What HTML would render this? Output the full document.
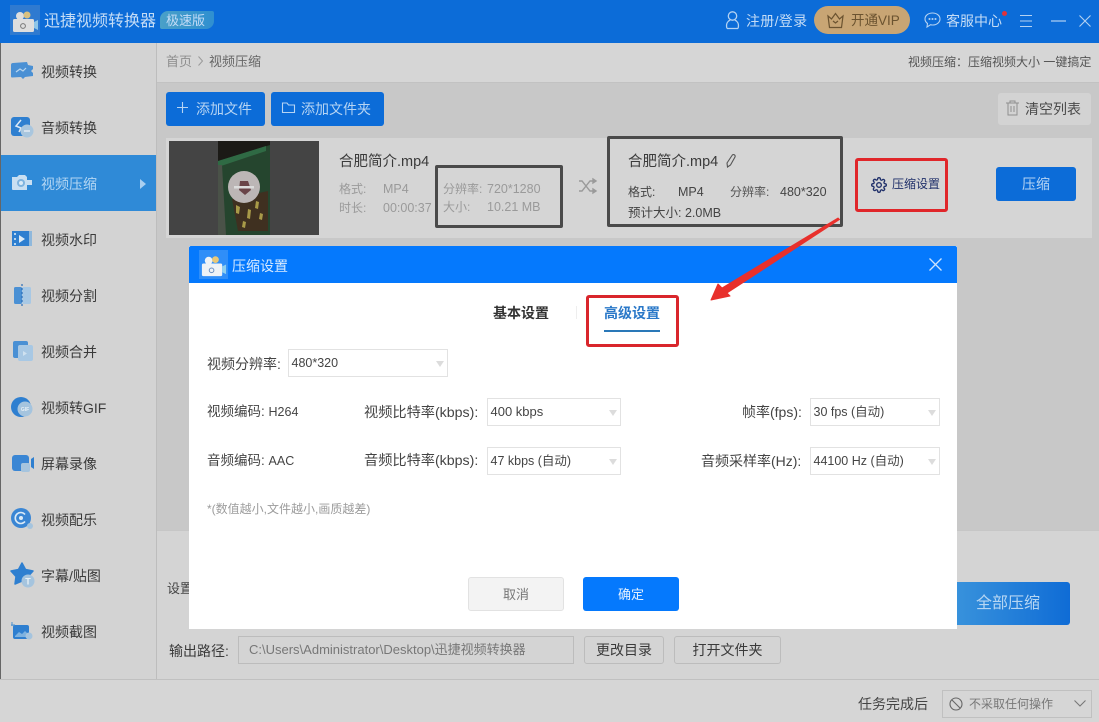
<!DOCTYPE html>
<html lang="zh"><head><meta charset="utf-8"><style>
html,body{margin:0;padding:0;width:1099px;height:722px;overflow:hidden;background:#d4d4d4}
body{position:relative;font-family:"Liberation Sans","Noto Sans CJK SC",sans-serif;color:#333}
.b{position:absolute;box-sizing:border-box}
.t{position:absolute;white-space:nowrap;font-size:14px;line-height:20px;height:20px}
.s{font-size:13px}.xs{font-size:12px}
svg{position:absolute;overflow:visible}
.sel{position:absolute;box-sizing:border-box;background:#fff;border:1px solid #e2e2e2;height:28px;font-size:12.5px;line-height:26px;padding-left:2.5px;color:#444;white-space:nowrap}
.sel:after{content:"";position:absolute;right:3px;top:11px;border-left:4px solid transparent;border-right:4px solid transparent;border-top:6px solid #dcdcdc}
.btn{position:absolute;box-sizing:border-box;border-radius:3px;text-align:center;white-space:nowrap}
.ic{filter:blur(.35px)}
</style></head><body>
<!-- base regions -->
<div class="b" style="left:0;top:0;width:1099px;height:43px;background:#0c6cd8"></div>
<div class="b" style="left:0;top:43px;width:157px;height:637px;background:#d3d3d3;border-right:1px solid #bdbdbd"></div>
<div class="b" style="left:0;top:43px;width:1px;height:679px;background:#666"></div>
<div class="b" style="left:157px;top:43px;width:942px;height:40px;background:#d6d6d6;border-bottom:1px solid #c2c2c2"></div>
<div class="b" style="left:157px;top:83px;width:942px;height:447px;background:#c8c8c8"></div>
<div class="b" style="left:157px;top:530px;width:942px;height:150px;background:#d4d4d4;border-top:1px solid #c6c6c6"></div>
<div class="b" style="left:0;top:679px;width:1099px;height:43px;background:#d6d6d6;border-top:1px solid #c0c0c0"></div>

<!-- title bar -->
<div class="b" style="left:10px;top:5px;width:30px;height:30px;background:#2f7ad0"></div>
<svg class="ic" style="left:10px;top:5px" width="30" height="30" viewBox="0 0 30 30"><rect x="3" y="14" width="21" height="13" rx="1.5" fill="#dedede"/><circle cx="10" cy="11" r="4" fill="#dedede"/><circle cx="17" cy="10" r="3.5" fill="#d8c080"/><path d="M24 17l4-2v10l-4-2z" fill="#8fc6e8"/><circle cx="13" cy="21" r="2.400" fill="none" stroke="#777" stroke-width="1"/></svg>
<div class="t" style="left:44px;top:11px;font-size:16px;color:#c4dcf6;line-height:22px;height:22px">迅捷视频转换器</div>
<div class="b" style="left:160px;top:11px;width:54px;height:18px;background:linear-gradient(90deg,#4aa0c8,#2f8fd0);border-radius:8px 2px 8px 2px"></div>
<div class="t xs" style="left:166px;top:11px;color:#c4dcf6;font-size:13px">极速版</div>

<svg style="left:724px;top:10px" width="18" height="20" viewBox="0 0 18 20" fill="none" stroke="#b4d2f2" stroke-width="1.300"><circle cx="8.500" cy="6" r="4.200"/><path d="M3 18.500c-1.500-5 1-7.500 3.200-8.500M14 18.500c1.500-5-1-7.500-3.200-8.500M3 18.500h11"/></svg>
<div class="t" style="left:746px;top:11px;color:#c4dcf6;letter-spacing:.3px">注册/登录</div>
<div class="b" style="left:814px;top:6px;width:96px;height:28px;border-radius:14px;background:#c8a574"></div>
<svg style="left:826px;top:12px" width="19" height="17" viewBox="0 0 19 17" fill="none" stroke="#6b5330" stroke-width="1.200"><path d="M2 4l3.500 3L9.500 1.500 13.500 7 17 4l-1.500 11.500h-12z"/><path d="M7 9l2.500 2L12 9"/></svg>
<div class="t" style="left:851px;top:11px;color:#6b5330;font-size:13.5px">开通VIP</div>
<svg style="left:924px;top:12px" width="17" height="16" viewBox="0 0 17 16" fill="none" stroke="#b4d2f2" stroke-width="1.100"><path d="M8.500 1C4.300 1 1 3.600 1 7c0 1.800 1 3.400 2.500 4.500L3 15l3.600-2.300c.6.200 1.200.3 1.900.3 4.200 0 7.500-2.600 7.500-6S12.700 1 8.500 1z"/><circle cx="5.500" cy="7" r=".5"/><circle cx="8.500" cy="7" r=".5"/><circle cx="11.500" cy="7" r=".5"/></svg>
<div class="t" style="left:946px;top:11px;color:#c4dcf6">客服中心</div>
<div class="b" style="left:1002px;top:11px;width:5px;height:5px;border-radius:50%;background:#e0333c"></div>
<svg style="left:1019px;top:14px" width="14" height="14" viewBox="0 0 14 14" stroke="#b4d2f2" stroke-width="1.100"><path d="M1 1.500h12M1 7h12M1 12.500h12"/></svg>
<svg style="left:1051px;top:20px" width="15" height="2" viewBox="0 0 15 2" stroke="#b4d2f2" stroke-width="1.200"><path d="M0 1h15"/></svg>
<svg style="left:1079px;top:15px" width="12" height="12" viewBox="0 0 12 12" stroke="#b4d2f2" stroke-width="1.100"><path d="M.5.500l11 11M11.500.5l-11 11"/></svg>

<!-- sidebar -->
<div class="b" style="left:1px;top:155px;width:155px;height:56px;background:#2f8ad7"></div>
<svg style="left:139px;top:179px" width="8" height="10"><path d="M1 0l6 5-6 5z" fill="#a9cff0"/></svg>
<div class="t" style="left:41px;top:62px;color:#3a3a3a">视频转换</div>
<div class="t" style="left:41px;top:118px;color:#3a3a3a">音频转换</div>
<div class="t" style="left:41px;top:174px;color:#b4d6f3">视频压缩</div>
<div class="t" style="left:41px;top:230px;color:#3a3a3a">视频水印</div>
<div class="t" style="left:41px;top:286px;color:#3a3a3a">视频分割</div>
<div class="t" style="left:41px;top:342px;color:#3a3a3a">视频合并</div>
<div class="t" style="left:41px;top:398px;color:#3a3a3a">视频转GIF</div>
<div class="t" style="left:41px;top:454px;color:#3a3a3a">屏幕录像</div>
<div class="t" style="left:41px;top:510px;color:#3a3a3a">视频配乐</div>
<div class="t" style="left:41px;top:566px;color:#3a3a3a">字幕/贴图</div>
<div class="t" style="left:41px;top:622px;color:#3a3a3a">视频截图</div>
<!-- sidebar icons -->
<svg class="ic" style="left:10px;top:60px" width="24" height="22" viewBox="0 0 24 22"><path d="M1 5a2 2 0 0 1 2-2l14-1 1 3 5 1v3l-2 2 2 2v3l-8 1-2 2-2-2-9 .5a1 1 0 0 1-1-1z" fill="#4a90d4"/><path d="M6 12l4-3 3 2 3-3" stroke="#b8d6f0" stroke-width="1.200" fill="none"/></svg>
<svg class="ic" style="left:10px;top:115px" width="24" height="24" viewBox="0 0 24 24"><rect x="1" y="2" width="19" height="19" rx="3" fill="#2e7fd0"/><path d="M11 5L6 11l5 2-2 4" stroke="#dbe9f6" stroke-width="1.500" fill="none"/><circle cx="17" cy="16" r="6.500" fill="#a9c6de"/><path d="M14 16h6" stroke="#e8eef4" stroke-width="1.400"/></svg>
<svg class="ic" style="left:10px;top:172px" width="24" height="22" viewBox="0 0 24 22"><path d="M2 5h5l2-2h6l2 2v3h5v5h-5v5H3a1 1 0 0 1-1-1z" fill="#c8dff2"/><circle cx="11" cy="11" r="4" fill="#7fb4df"/><circle cx="11" cy="11" r="2" fill="#dcebf7"/></svg>
<svg class="ic" style="left:11px;top:229px" width="22" height="20" viewBox="0 0 22 20"><rect x="1" y="2" width="17" height="15" fill="#2e7fd0"/><path d="M18 2h3v15h-3z" fill="#8fb8dc"/><path d="M8 6l6 4-6 4z" fill="#dcebf7"/><path d="M3 4h2v2H3zM3 9h2v2H3zM3 14h2v2H3z" fill="#b9d6ef"/></svg>
<svg class="ic" style="left:13px;top:283px" width="20" height="24" viewBox="0 0 20 24"><rect x="1" y="4" width="8" height="17" rx="1.500" fill="#4a90d4"/><rect x="9" y="4" width="9" height="17" rx="1.500" fill="#a8c8e4"/><path d="M9 1v23" stroke="#2c6fb8" stroke-width="1.200" stroke-dasharray="2 2"/></svg>
<svg class="ic" style="left:12px;top:340px" width="22" height="22" viewBox="0 0 22 22"><rect x="1" y="1" width="15" height="17" rx="2" fill="#4a90d4"/><rect x="6" y="5" width="15" height="16" rx="2" fill="#a8c8e4"/><path d="M11 11l4 2.500-4 2.500z" fill="#cfe1f0"/></svg>
<svg class="ic" style="left:10px;top:396px" width="24" height="24" viewBox="0 0 24 24"><circle cx="11" cy="11" r="10" fill="#2e7fd0"/><circle cx="15" cy="13" r="7.500" fill="#a5c4de"/><text x="15" y="15" font-size="5" fill="#e8f0f6" text-anchor="middle" font-family="Liberation Sans" font-weight="bold">GIF</text></svg>
<svg class="ic" style="left:11px;top:454px" width="24" height="20" viewBox="0 0 24 20"><rect x="1" y="1" width="17" height="16" rx="3" fill="#3a86d4"/><path d="M20 5l3-2v12l-3-2z" fill="#2e7fd0"/><rect x="10" y="9" width="9" height="9" rx="2" fill="#a5c4de"/></svg>
<svg class="ic" style="left:10px;top:507px" width="24" height="24" viewBox="0 0 24 24"><circle cx="11" cy="11" r="10" fill="#3a86d4"/><path d="M15 7.500a5.500 5.500 0 1 0 0 7" fill="none" stroke="#dcebf7" stroke-width="1.600"/><circle cx="11" cy="11" r="2" fill="#dcebf7"/><circle cx="20" cy="19" r="3" fill="#a5c4de"/></svg>
<svg class="ic" style="left:10px;top:562px" width="26" height="26" viewBox="0 0 26 26"><path d="M12 1l3.500 6.500 7.500 1.500-5 5.500 1 7.500-7-3-7 3 1-7.500-5-5.500 7.500-1.500z" fill="#2e7fd0" stroke="#2e7fd0" stroke-width="1.500" stroke-linejoin="round"/><circle cx="18" cy="19" r="6.500" fill="#a5c4de"/><text x="18" y="22.500" font-size="9" fill="#e8f0f6" text-anchor="middle" font-family="Liberation Sans" font-weight="bold">T</text></svg>
<svg class="ic" style="left:11px;top:622px" width="22" height="20" viewBox="0 0 22 20"><rect x="2" y="3" width="16" height="14" rx="2" fill="#2e7fd0"/><path d="M1 0v4M0 3h4" stroke="#4a90d0"/><path d="M4 14l4-4 3 2 3-3 4 4v2H4z" fill="#7db2e0"/><circle cx="18" cy="14" r="3.500" fill="#a5c4de"/></svg>

<!-- header strip -->
<div class="t s" style="left:166px;top:52px;color:#8e8e8e">首页</div>
<svg style="left:198px;top:56px" width="6" height="11" fill="none" stroke="#9a9a9a"><path d="M.5.500l4 4.500-4 4.500"/></svg>
<div class="t s" style="left:209px;top:52px;color:#666">视频压缩</div>
<div class="t xs" style="left:908px;top:52px;color:#555">视频压缩：压缩视频大小 一键搞定</div>

<!-- toolbar -->
<div class="btn" style="left:166px;top:92px;width:99px;height:34px;background:#0c6cd8"></div>
<svg style="left:177px;top:102px" width="11" height="11" stroke="#b6d4f3" stroke-width="1.100"><path d="M5.500 0v11M0 5.500h11"/></svg>
<div class="t" style="left:196px;top:99px;color:#b6d4f3">添加文件</div>
<div class="btn" style="left:271px;top:92px;width:113px;height:34px;background:#0c6cd8"></div>
<svg style="left:282px;top:102px" width="13" height="11" fill="none" stroke="#b6d4f3" stroke-width="1.100"><path d="M.5 1h4.500l1.500 2h6v7.500H.5z"/></svg>
<div class="t" style="left:301px;top:99px;color:#b6d4f3">添加文件夹</div>
<div class="btn" style="left:998px;top:93px;width:93px;height:32px;background:#d3d3d3"></div>
<svg style="left:1006px;top:100px" width="13" height="16" fill="none" stroke="#8f8f8f"><path d="M0 3h13M4 3V1h5v2M2 3v12h9V3M5 6v6M8 6v6"/></svg>
<div class="t" style="left:1025px;top:99px;color:#4a4a4a">清空列表</div>

<!-- file row -->
<div class="b" style="left:166px;top:138px;width:926px;height:100px;background:#d5d5d5"></div>
<div class="b" style="left:169px;top:141px;width:150px;height:94px;background:#444"></div>
<svg class="ic" style="left:218px;top:141px" width="52" height="94" viewBox="0 0 52 94"><rect width="52" height="94" fill="#1b1a16"/><path d="M0 20L52 4v90H0z" fill="#25452e"/><path d="M0 20L48 5v5L0 26z" fill="#2f6a44"/><path d="M14 58l36-8v40H20z" fill="#3f3020"/><path d="M18 64l4 2-1 7-3-1zM30 68l3 1-1 9-3-1zM38 60l3 1-1 7-3-1zM25 80l3 1-1 6-3-1zM42 72l3 1-1 6-3-1z" fill="#a89a48"/><path d="M0 24h4l4 70H0z" fill="#4a5248"/><circle cx="26" cy="46" r="16" fill="#bcb6b6"/><path d="M22 40h8l3 9-6 5-6-5z" fill="#6a4448"/><rect x="16" y="45" width="20" height="2.500" fill="#dcdcdc"/></svg>
<div class="t" style="left:339px;top:152px;color:#3a3a3a;font-size:14.500px">合肥简介.mp4</div>
<div class="t xs" style="left:339px;top:179px;color:#9a9a9a">格式:</div>
<div class="t xs" style="left:383px;top:179px;color:#9a9a9a;font-size:12.500px">MP4</div>
<div class="t xs" style="left:339px;top:198px;color:#9a9a9a">时长:</div>
<div class="t xs" style="left:383px;top:198px;color:#9a9a9a;font-size:12.500px">00:00:37</div>
<div class="t xs" style="left:443px;top:179px;color:#9a9a9a">分辨率:</div>
<div class="t xs" style="left:487px;top:179px;color:#9a9a9a;font-size:12.500px">720*1280</div>
<div class="t xs" style="left:443px;top:197px;color:#9a9a9a">大小:</div>
<div class="t xs" style="left:487px;top:197px;color:#9a9a9a;font-size:12.500px">10.21 MB</div>
<div class="b" style="left:435px;top:165px;width:128px;height:63px;border:3px solid #4a4a4a;border-radius:2px"></div>
<svg style="left:579px;top:179px" width="17" height="14" fill="none" stroke="#9a9a9a" stroke-width="1.400"><path d="M0 2h3l8 10h4M0 12h3l8-10h4"/><path d="M14 0l3 2-3 2zM14 10l3 2-3 2z" fill="#9a9a9a"/></svg>
<div class="b" style="left:607px;top:136px;width:236px;height:91px;border:3px solid #4a4a4a;border-radius:2px"></div>
<div class="t" style="left:628px;top:152px;color:#3a3a3a;font-size:14.500px">合肥简介.mp4</div>
<svg style="left:725px;top:154px" width="12" height="14" fill="none" stroke="#555" stroke-width="1.100"><path d="M2 9l5-7.500a1.500 1.500 0 0 1 3 1.500L5.500 11 2.500 13z"/></svg>
<div class="t xs" style="left:628px;top:182px;color:#444">格式:</div>
<div class="t xs" style="left:678px;top:182px;color:#444;font-size:12.500px">MP4</div>
<div class="t xs" style="left:730px;top:182px;color:#555">分辨率:</div>
<div class="t xs" style="left:780px;top:182px;color:#444;font-size:12.500px">480*320</div>
<div class="t xs" style="left:628px;top:203px;color:#444;font-size:12.500px">预计大小: 2.0MB</div>
<div class="b" style="left:855px;top:158px;width:93px;height:54px;border:3px solid #e0262a;border-radius:3px"></div>
<svg style="left:871px;top:177px" width="16" height="16" viewBox="0 0 24 24" fill="none" stroke="#20306a" stroke-width="2"><circle cx="12" cy="12" r="3.500"/><path d="M19.400 15a1.700 1.700 0 0 0 .3 1.800l.1.100a2 2 0 1 1-2.900 2.900l-.1-.1a1.700 1.700 0 0 0-2.800 1.200V21a2 2 0 1 1-4 0v-.1a1.700 1.700 0 0 0-2.900-1.200l-.1.100a2 2 0 1 1-2.900-2.900l.1-.1a1.700 1.700 0 0 0-1.200-2.800H3a2 2 0 1 1 0-4h.1a1.700 1.700 0 0 0 1.200-2.900l-.1-.1a2 2 0 1 1 2.900-2.900l.1.100a1.700 1.700 0 0 0 2.800-1.200V3a2 2 0 1 1 4 0v.1a1.700 1.700 0 0 0 2.900 1.200l.1-.1a2 2 0 1 1 2.900 2.900l-.1.100a1.700 1.700 0 0 0 1.200 2.800H21a2 2 0 1 1 0 4h-.1a1.700 1.700 0 0 0-1.500 1z"/></svg>
<div class="t xs" style="left:892px;top:174px;color:#20306a">压缩设置</div>
<div class="btn" style="left:996px;top:167px;width:80px;height:34px;background:#0c6cd8;color:#b6d4f3;font-size:14px;line-height:34px">压缩</div>

<!-- bottom area -->
<div class="t s" style="left:167px;top:579px;color:#444">设置</div>
<div class="btn" style="left:950px;top:582px;width:120px;height:43px;background:linear-gradient(90deg,#3a94dc,#0f6cd6);color:#b6d6f3;font-size:16px;line-height:44px"><span style="margin-right:4px">全部压缩</span></div>
<div class="t" style="left:169px;top:641px;color:#3a3a3a;font-size:14px">输出路径:</div>
<div class="b" style="left:238px;top:636px;width:336px;height:28px;border:1px solid #bcbcbc"></div>
<div class="t s" style="left:249px;top:640px;color:#777">C:\Users\Administrator\Desktop\迅捷视频转换器</div>
<div class="btn" style="left:584px;top:636px;width:80px;height:28px;border:1px solid #bcbcbc;line-height:26px;font-size:14px;color:#3a3a3a">更改目录</div>
<div class="btn" style="left:674px;top:636px;width:107px;height:28px;border:1px solid #bcbcbc;line-height:26px;font-size:14px;color:#3a3a3a">打开文件夹</div>
<div class="t" style="left:858px;top:694px;color:#444">任务完成后</div>
<div class="b" style="left:942px;top:690px;width:150px;height:28px;border:1px solid #c0c0c0"></div>
<svg style="left:949px;top:697px" width="14" height="14" fill="none" stroke="#666" stroke-width="1.100"><circle cx="7" cy="7" r="6"/><path d="M3 3l8 8"/></svg>
<div class="t xs" style="left:969px;top:694px;color:#777">不采取任何操作</div>
<svg style="left:1074px;top:700px" width="12" height="7" fill="none" stroke="#777" stroke-width="1.100"><path d="M.5.500l5.500 5.500 5.500-5.500"/></svg>

<!-- dialog -->
<div class="b" style="left:189px;top:246px;width:768px;height:383px;background:#fff"></div>
<div class="b" style="left:189px;top:246px;width:768px;height:37px;background:#0579fd;border-radius:2px 2px 0 0"></div>
<div class="b" style="left:199px;top:250px;width:29px;height:29px;background:#2f8ef8"></div>
<svg class="ic" style="left:199px;top:250px" width="29" height="29" viewBox="0 0 30 30"><rect x="3" y="14" width="21" height="13" rx="1.500" fill="#eef2f6"/><circle cx="10" cy="11" r="4" fill="#eef2f6"/><circle cx="17" cy="10" r="3.500" fill="#e8c878"/><path d="M24 17l4-2v10l-4-2z" fill="#8fd0f0"/><circle cx="13" cy="21" r="2.400" fill="none" stroke="#6a8fc0" stroke-width="1"/></svg>
<div class="t" style="left:232px;top:256px;color:#d8ebff">压缩设置</div>
<svg style="left:929px;top:258px" width="13" height="13" stroke="#cfe4fc" stroke-width="1.300"><path d="M.5.500l12 12M12.500.5l-12 12"/></svg>

<div class="t" style="left:493px;top:303px;color:#333;font-weight:700;font-size:14px">基本设置</div>
<div class="b" style="left:576px;top:306px;width:1px;height:13px;background:#eee"></div>
<div class="t" style="left:604px;top:303px;color:#2a78c8;font-weight:700;font-size:14px">高级设置</div>
<div class="b" style="left:604px;top:330px;width:56px;height:2px;background:#2a78b8"></div>
<div class="b" style="left:586px;top:295px;width:93px;height:52px;border:3px solid #d9262c;border-radius:3px"></div>
<svg style="left:0;top:0" width="1099" height="722"><polygon points="838,218 839.500,219.500 727,293 730,296 711,300 718,284 722,288" fill="#e8302c" stroke="#e8302c" stroke-width="1" stroke-linejoin="round"/></svg>

<div class="t" style="left:207px;top:354px;color:#444">视频分辨率:</div>
<div class="sel" style="left:288px;top:349px;width:160px">480*320</div>
<div class="t" style="left:207px;top:402px;color:#444;font-size:13.500px">视频编码: <span style="font-size:12.500px">H264</span></div>
<div class="t" style="left:364px;top:403px;color:#444;font-size:14.200px">视频比特率(kbps):</div>
<div class="sel" style="left:487px;top:398px;width:134px;font-size:13px">400 kbps</div>
<div class="t" style="left:742px;top:402px;color:#444;font-size:14px">帧率(fps):</div>
<div class="sel" style="left:810px;top:398px;width:130px">30 fps (自动)</div>
<div class="t" style="left:207px;top:451px;color:#444;font-size:13.500px">音频编码: <span style="font-size:12.500px">AAC</span></div>
<div class="t" style="left:364px;top:451px;color:#444;font-size:14.200px">音频比特率(kbps):</div>
<div class="sel" style="left:487px;top:447px;width:134px">47 kbps (自动)</div>
<div class="t" style="left:701px;top:451px;color:#444;font-size:14px">音频采样率(Hz):</div>
<div class="sel" style="left:810px;top:447px;width:130px">44100 Hz (自动)</div>
<div class="t xs" style="left:207px;top:499px;color:#9c9c9c">*(数值越小,文件越小,画质越差)</div>
<div class="btn" style="left:468px;top:577px;width:96px;height:34px;background:#f3f3f3;border:1px solid #e2e2e2;color:#777;font-size:13px;line-height:34px">取消</div>
<div class="btn" style="left:583px;top:577px;width:96px;height:34px;background:#0579fd;color:#e4f1ff;font-size:13px;line-height:36px">确定</div>
</body></html>
